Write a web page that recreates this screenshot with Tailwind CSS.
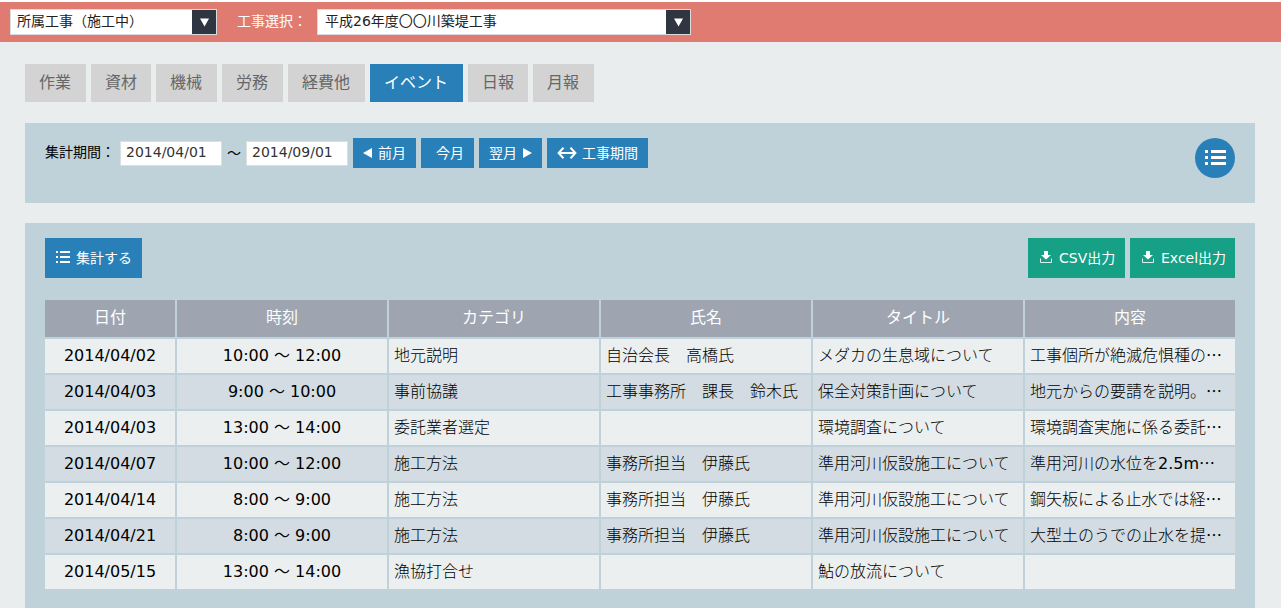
<!DOCTYPE html>
<html lang="ja">
<head>
<meta charset="utf-8">
<meta name="viewport" content="width=device-width, initial-scale=1">
<title>イベント集計</title>
<script src="https://cdn.jsdelivr.net/npm/@tailwindcss/browser@4"></script>
</head>
<body class="min-h-screen overflow-hidden bg-[#e9eded] font-['DejaVu_Sans','Noto_Sans_CJK_JP',sans-serif] text-base text-black">
  <header class="flex h-[42px] items-center border-t-2 border-white bg-[#df7b71] pl-2.5 text-sm">
    <div class="relative w-[207px]">
      <select aria-label="所属工事" class="block h-[26px] w-full appearance-none border border-[#d8dcdc] bg-white pb-0.5 pl-1.5 text-sm leading-5 text-[#222]">
        <option>所属工事（施工中）</option>
      </select>
      <span class="pointer-events-none absolute inset-y-px right-px flex w-6 items-center justify-center bg-[#2f3642]">
        <svg width="9" height="9" viewBox="0 0 9 9" fill="#fff" aria-hidden="true"><path d="M0 0.5h9L4.5 8.5z"/></svg>
      </span>
    </div>
    <label for="koji" class="ml-5 pb-0.5 text-white">工事選択：</label>
    <div class="relative ml-2.5 w-[374px]">
      <select id="koji" class="block h-[26px] w-full appearance-none border border-[#d8dcdc] bg-white pb-0.5 pl-[7px] text-sm leading-5 text-[#222]">
        <option>平成26年度〇〇川築堤工事</option>
      </select>
      <span class="pointer-events-none absolute inset-y-px right-px flex w-6 items-center justify-center bg-[#2f3642]">
        <svg width="9" height="9" viewBox="0 0 9 9" fill="#fff" aria-hidden="true"><path d="M0 0.5h9L4.5 8.5z"/></svg>
      </span>
    </div>
  </header>

  <main class="pt-[22px] pr-[26px] pl-[25px]">
    <nav class="flex gap-[5px] leading-[38px] text-[#666]">
      <a href="#" class="bg-[#d3d3d3] pr-[15px] pl-3.5">作業</a>
      <a href="#" class="bg-[#d3d3d3] px-3.5">資材</a>
      <a href="#" class="bg-[#d3d3d3] pr-[15px] pl-3.5">機械</a>
      <a href="#" class="bg-[#d3d3d3] pr-[15px] pl-3.5">労務</a>
      <a href="#" class="bg-[#d3d3d3] pr-[15px] pl-3.5">経費他</a>
      <a href="#" aria-current="page" class="bg-[#2980b9] pr-[15px] pl-3.5 text-white">イベント</a>
      <a href="#" class="bg-[#d3d3d3] px-3.5">日報</a>
      <a href="#" class="bg-[#d3d3d3] pr-[15px] pl-3.5">月報</a>
    </nav>

    <section class="mt-[21px] flex h-20 items-start justify-between bg-[#c0d2d9] px-5 pt-[15px] text-sm">
      <div class="flex items-center">
        <label for="from" class="w-[75px] pb-0.5">集計期間：</label>
        <input id="from" type="text" value="2014/04/01" class="h-[25px] w-[102px] border border-[#dcdfe0] bg-white px-[5px] pb-0.5 text-sm text-[#333]">
        <span class="w-6 text-center">〜</span>
        <input aria-label="集計期間の終了日" type="text" value="2014/09/01" class="h-[25px] w-[102px] border border-[#dcdfe0] bg-white px-[5px] pb-0.5 text-sm text-[#333]">
        <div class="ml-[5px] flex gap-[5px] leading-[30px] text-white">
          <button type="button" class="flex items-center gap-1.5 bg-[#2980b9] px-2.5">
            <svg width="9" height="10" viewBox="0 0 9 10" fill="#fff" aria-hidden="true"><path d="M9 0v10L0 5z"/></svg>前月</button>
          <button type="button" class="bg-[#2980b9] pr-2.5 pl-[15px]">今月</button>
          <button type="button" class="flex items-center gap-1.5 bg-[#2980b9] px-2.5">翌月<svg width="9" height="10" viewBox="0 0 9 10" fill="#fff" aria-hidden="true"><path d="M0 0v10L9 5z"/></svg></button>
          <button type="button" class="flex items-center gap-[5px] bg-[#2980b9] px-2.5">
            <svg width="20" height="12" viewBox="0 0 20 12" fill="none" stroke="#fff" stroke-width="2" aria-hidden="true"><path d="M6.5 0.8L1.6 6l4.9 5.2M13.500 0.8L18.400 6l-4.900 5.200M2 6h16"/></svg>工事期間</button>
        </div>
      </div>
      <button type="button" aria-label="一覧" class="flex size-10 items-center justify-center rounded-full bg-[#2980b9] pb-px">
        <svg width="21" height="15" viewBox="0 0 21 15" fill="#fff" aria-hidden="true"><path d="M0 0h3v3H0zM6 0h15v3H6zM0 6h3v3H0zM6 6h15v3H6zM0 12h3v3H0zM6 12h15v3H6z"/></svg>
      </button>
    </section>

    <section class="mt-5 bg-[#c0d2d9] px-5 pt-[15px] pb-10">
      <div class="flex justify-between text-sm leading-10 text-white">
        <button type="button" class="flex items-center gap-1.5 bg-[#2980b9] pr-2.5 pl-[11px]">
          <svg width="14" height="14" viewBox="0 0 14 14" fill="#fff" aria-hidden="true"><path d="M0 0h2v2H0zM4 0h10v2H4zM0 5h2v2H0zM4 5h10v2H4zM0 10h2v2H0zM4 10h10v2H4z"/></svg>集計する</button>
        <div class="flex gap-[5px]">
          <button type="button" class="flex w-[97px] items-center gap-[7px] bg-[#16a085] pl-3">
            <svg width="12" height="14" viewBox="0 0 12 14" aria-hidden="true"><path d="M4 0h4v4h3L6 8.500 1 4h3z" fill="#fff"/><path d="M0.500 7.500v4h11v-4" fill="none" stroke="#fff" stroke-opacity=".85"/></svg>CSV出力</button>
          <button type="button" class="flex w-[105px] items-center gap-[7px] bg-[#16a085] pl-3">
            <svg width="12" height="14" viewBox="0 0 12 14" aria-hidden="true"><path d="M4 0h4v4h3L6 8.500 1 4h3z" fill="#fff"/><path d="M0.500 7.500v4h11v-4" fill="none" stroke="#fff" stroke-opacity=".85"/></svg>Excel出力</button>
        </div>
      </div>

      <div class="-mx-0.5 mt-5">
        <table class="w-full table-fixed border-separate border-spacing-0.5 whitespace-nowrap">
          <colgroup><col class="w-[130px]"><col><col><col><col><col></colgroup>
          <thead class="bg-[#9ea5b1] text-white">
            <tr class="h-[37px] [&_th]:p-0 [&_th]:pb-0.5 [&_th]:font-normal">
              <th scope="col">日付</th><th scope="col">時刻</th><th scope="col">カテゴリ</th><th scope="col">氏名</th><th scope="col">タイトル</th><th scope="col">内容</th>
            </tr>
          </thead>
          <tbody class="leading-[34px] font-light [&_td]:h-[34px] [&_td]:overflow-hidden [&_td]:px-[5px] [&_td]:py-0 [&_td:nth-child(-n+2)]:text-center [&_td:nth-child(-n+2)]:font-normal [&_tr]:bg-[#ebefef] [&_tr:nth-child(even)]:bg-[#d3dce2] [&_i]:font-['Noto_Sans_CJK_JP'] [&_i]:font-normal [&_i]:not-italic [&_i]:leading-none">
            <tr><td>2014/04/02</td><td>10:00 〜 12:00</td><td>地元説明</td><td>自治会長　高橋氏</td><td>メダカの生息域について</td><td>工事個所が絶滅危惧種の<i>…</i></td></tr>
            <tr><td>2014/04/03</td><td>9:00 〜 10:00</td><td>事前協議</td><td>工事事務所　課長　鈴木氏</td><td>保全対策計画について</td><td>地元からの要請を説明。<i>…</i></td></tr>
            <tr><td>2014/04/03</td><td>13:00 〜 14:00</td><td>委託業者選定</td><td></td><td>環境調査について</td><td>環境調査実施に係る委託<i>…</i></td></tr>
            <tr><td>2014/04/07</td><td>10:00 〜 12:00</td><td>施工方法</td><td>事務所担当　伊藤氏</td><td>準用河川仮設施工について</td><td>準用河川の水位を<span class="font-normal">2.5m</span><i>…</i></td></tr>
            <tr><td>2014/04/14</td><td>8:00 〜 9:00</td><td>施工方法</td><td>事務所担当　伊藤氏</td><td>準用河川仮設施工について</td><td>鋼矢板による止水では経<i>…</i></td></tr>
            <tr><td>2014/04/21</td><td>8:00 〜 9:00</td><td>施工方法</td><td>事務所担当　伊藤氏</td><td>準用河川仮設施工について</td><td>大型土のうでの止水を提<i>…</i></td></tr>
            <tr><td>2014/05/15</td><td>13:00 〜 14:00</td><td>漁協打合せ</td><td></td><td>鮎の放流について</td><td></td></tr>
          </tbody>
        </table>
      </div>
    </section>
  </main>
</body>
</html>
